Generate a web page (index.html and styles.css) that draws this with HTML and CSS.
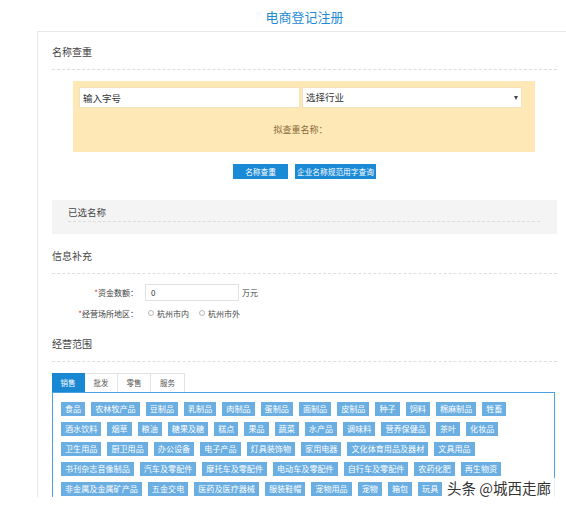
FILE: index.html
```html
<!DOCTYPE html>
<html lang="zh-CN">
<head>
<meta charset="utf-8">
<title>电商登记注册</title>
<link rel="stylesheet" href="styles.css">
</head>
<body>
<div class="page">
  <div class="wrap">
    <h1 class="title">电商登记注册</h1>
    <div class="panel">
      <div class="sec-head">名称查重</div>
      <div class="check-box">
        <div class="inputs">
          <input class="field" type="text" placeholder="输入字号">
          <div class="select">选择行业<span class="caret"></span></div>
        </div>
        <div class="check-name">拟查重名称：</div>
      </div>
      <div class="btns">
        <span class="btn btn-wide">名称查重</span>
        <span class="btn">企业名称规范用字查询</span>
      </div>
      <div class="chosen">
        <div class="chosen-head">已选名称</div>
      </div>

      <div class="sec-head sec-gap">信息补充</div>
      <div class="form-row row-first">
        <span class="label"><i class="req">*</i>资金数额：</span>
        <span class="money">0</span>
        <span class="unit">万元</span>
      </div>
      <div class="form-row row-second">
        <span class="label"><i class="req">*</i>经营场所地区：</span>
        <span class="radio"></span><span class="radio-text">杭州市内</span>
        <span class="radio"></span><span class="radio-text">杭州市外</span>
      </div>

      <div class="sec-head sec-gap">经营范围</div>
      <div class="tabs">
        <span class="tab active">销售</span>
        <span class="tab">批发</span>
        <span class="tab">零售</span>
        <span class="tab">服务</span>
      </div>
      <div class="tab-body">
        <div class="tag-row">
          <span class="tag">食品</span><span class="tag">农林牧产品</span><span class="tag">豆制品</span><span class="tag">乳制品</span><span class="tag">肉制品</span><span class="tag">蛋制品</span><span class="tag">面制品</span><span class="tag">皮制品</span><span class="tag">种子</span><span class="tag">饲料</span><span class="tag">棉麻制品</span><span class="tag">牲畜</span>
        </div>
        <div class="tag-row">
          <span class="tag">酒水饮料</span><span class="tag">烟草</span><span class="tag">粮油</span><span class="tag">糖果及糖</span><span class="tag">糕点</span><span class="tag">果品</span><span class="tag">蔬菜</span><span class="tag">水产品</span><span class="tag">调味料</span><span class="tag">营养保健品</span><span class="tag">茶叶</span><span class="tag">化妆品</span>
        </div>
        <div class="tag-row">
          <span class="tag">卫生用品</span><span class="tag">厨卫用品</span><span class="tag">办公设备</span><span class="tag">电子产品</span><span class="tag">灯具装饰物</span><span class="tag">家用电器</span><span class="tag">文化体育用品及器材</span><span class="tag">文具用品</span>
        </div>
        <div class="tag-row">
          <span class="tag">书刊杂志音像制品</span><span class="tag">汽车及零配件</span><span class="tag">摩托车及零配件</span><span class="tag">电动车及零配件</span><span class="tag">自行车及零配件</span><span class="tag">农药化肥</span><span class="tag">再生物资</span>
        </div>
        <div class="tag-row">
          <span class="tag">非金属及金属矿产品</span><span class="tag">五金交电</span><span class="tag">医药及医疗器械</span><span class="tag">服装鞋帽</span><span class="tag">宠物用品</span><span class="tag">宠物</span><span class="tag">箱包</span><span class="tag">玩具</span>
        </div>
      </div>
    </div>
  </div>
  <div class="watermark">头条 @城西走廊</div>
</div>
</body>
</html>
```

FILE: styles.css
```css
html, body {
  margin: 0;
  padding: 0;
  background: #fff;
  overflow: hidden;
}
body {
  font-family: "Noto Sans CJK SC", "Noto Sans", sans-serif;
  color: #333;
  width: 566px;
  height: 507px;
}
.page {
  position: relative;
  width: 566px;
  height: 497px;
  overflow: hidden;
}
.wrap {
  margin-left: 37px;
  width: 535px;
}
.title {
  margin: 0;
  height: 31px;
  line-height: 34px;
  text-align: center;
  font-size: 13px;
  font-weight: normal;
  color: #1e8ad6;
}
.panel {
  border: 1px solid #e8e8e8;
  padding: 0 14px 40px 14px;
}
.sec-head {
  padding-top: 10px;
  padding-bottom: 7px;
  line-height: 20px;
  font-size: 10px;
  color: #444;
  border-bottom: 1px dashed #dedede;
}
.sec-gap {
  padding-top: 0;
  padding-bottom: 7px;
  margin-top: 12px;
}
.check-box {
  margin: 11px 22px 0 21px;
  padding: 6px 13px 12px 6px;
  background: #fde8b6;
}
.inputs {
  display: flex;
  gap: 2px;
}
.field, .select {
  box-sizing: border-box;
  width: 221px;
  height: 21px;
  border: 1px solid #f3e3bd;
  background: #fff;
  font-family: inherit;
  font-size: 9.5px;
  color: #333;
  padding: 0 3px;
  margin: 0;
  outline: none;
}
.field::placeholder {
  color: #333;
}
.select {
  position: relative;
  width: 220px;
  line-height: 19px;
}
.caret {
  position: absolute;
  right: 3px;
  top: 8px;
  width: 0;
  height: 0;
  border-left: 2.5px solid transparent;
  border-right: 2.5px solid transparent;
  border-top: 4px solid #444;
}
.check-name {
  margin-top: 12px;
  line-height: 20px;
  text-align: center;
  font-size: 9px;
  color: #8a6a3a;
}
.btns {
  margin-top: 12px;
  display: flex;
  justify-content: center;
  gap: 7px;
}
.btn {
  height: 15px;
  line-height: 15px;
  padding: 0 2px;
  background: #1b8ad6;
  color: #fff;
  font-size: 7.7px;
}
.btn-wide {
  padding: 0 12px;
}
.chosen {
  margin-top: 21px;
  height: 34px;
  box-sizing: border-box;
  padding: 3px 17px 0 16px;
  background: #f4f4f4;
}
.chosen-head {
  line-height: 18px;
  font-size: 9.5px;
  color: #444;
  border-bottom: 1px dashed #dcdcdc;
}
.form-row {
  display: flex;
  align-items: center;
  font-size: 8px;
  color: #444;
}
.row-first {
  margin-top: 10px;
  height: 17px;
}
.row-second {
  margin-top: 3px;
  height: 18px;
}
.label {
  width: 86px;
  text-align: right;
}
.req {
  font-style: normal;
  color: #e0382f;
}
.money {
  box-sizing: border-box;
  margin-left: 7px;
  width: 94px;
  height: 17px;
  line-height: 15px;
  border: 1px solid #e1e1e1;
  padding-left: 5px;
  color: #333;
}
.unit {
  margin-left: 3px;
}
.radio {
  box-sizing: border-box;
  width: 6px;
  height: 6px;
  border: 1px solid #b8b8b8;
  border-radius: 50%;
  margin-left: 10px;
}
.radio-text {
  margin-left: 3px;
}
.tabs {
  margin-top: 11px;
  display: flex;
  height: 19px;
}
.tab {
  box-sizing: border-box;
  width: 33px;
  height: 19px;
  line-height: 18px;
  text-align: center;
  font-size: 7.5px;
  color: #555;
  border: 1px solid #e3e3e3;
  border-left: none;
  border-bottom: none;
}
.tab.active {
  background: #1a87d2;
  border-color: #1a87d2;
  color: #fff;
}
.tab:last-child {
  width: 34px;
}
.tab-body {
  margin-right: 2px;
  border: 1px solid #4aa2e0;
  padding: 9px 8px 8px 8px;
}
.tag-row {
  display: flex;
  gap: 6px;
  margin-bottom: 6px;
  white-space: nowrap;
}
.tag {
  height: 14px;
  line-height: 14px;
  padding: 0 4px;
  background: #6aaee2;
  color: #fff;
  font-size: 8.1px;
}
.watermark {
  position: absolute;
  left: 446px;
  top: 478px;
  padding: 0 6px 0 1px;
  line-height: 19px;
  font-size: 14.5px;
  color: #333;
  background: rgba(255, 255, 255, 0.85);
}
```
